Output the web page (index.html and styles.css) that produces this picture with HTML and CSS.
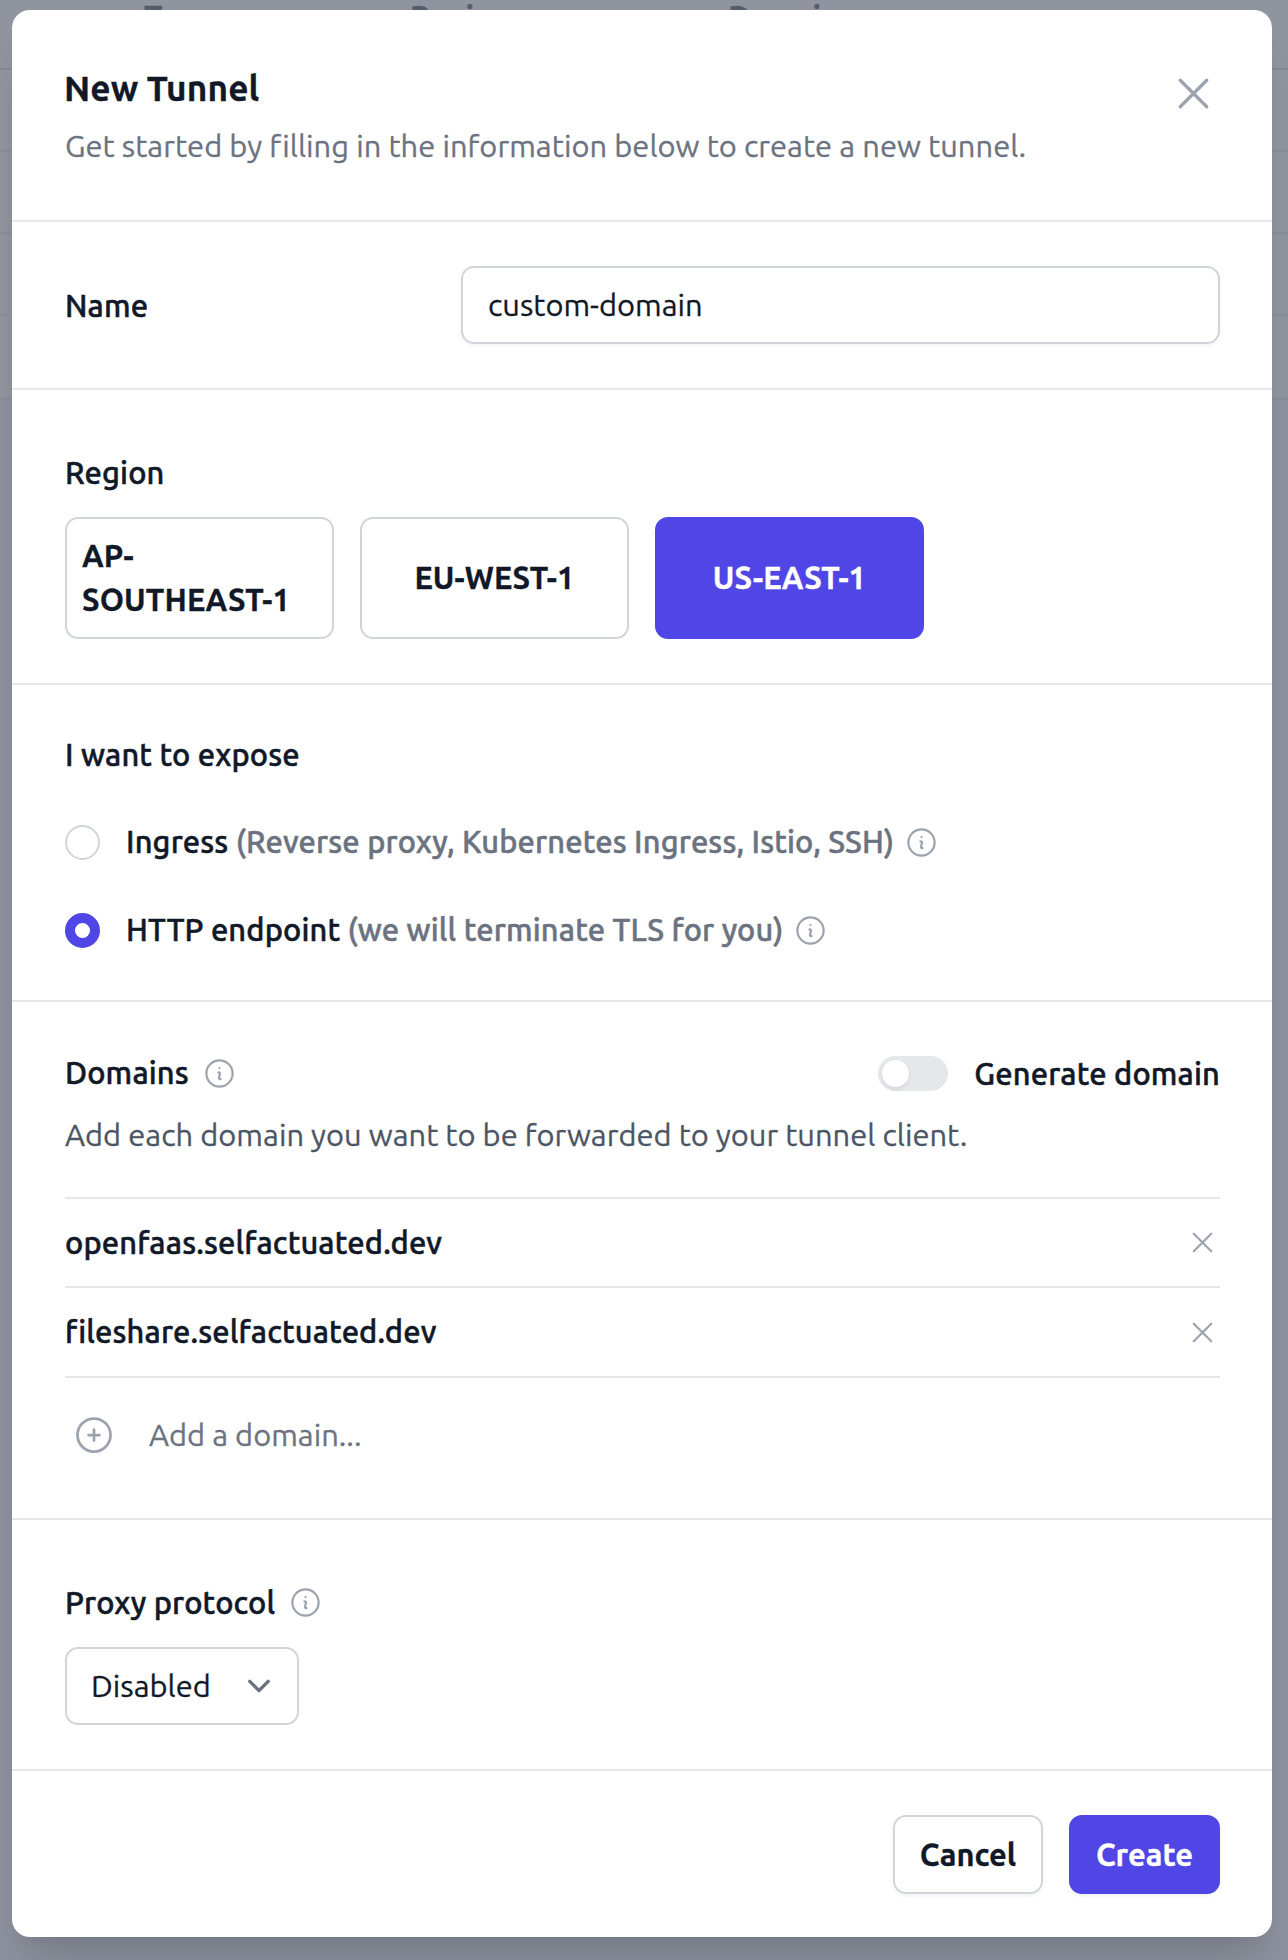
FILE: index.html
```html
<!DOCTYPE html>
<html lang="en">
<head>
<meta charset="utf-8">
<title>New Tunnel</title>
<link rel="stylesheet" href="styles.css">
</head>
<body>
<svg class="sprite" aria-hidden="true">
  <symbol id="info" viewBox="0 0 24 24"><path d="M11.25 11.25l.041-.02a.75.75 0 011.063.852l-.708 2.836a.75.75 0 001.063.853l.041-.021M21 12a9 9 0 11-18 0 9 9 0 0118 0zm-9-3.75h.008v.008H12V8.25z"/></symbol>
  <symbol id="x" viewBox="0 0 24 24"><path d="M6 18L18 6M6 6l12 12"/></symbol>
  <symbol id="plus" viewBox="0 0 24 24"><path d="M12 9v6m3-3H9m12 0a9 9 0 11-18 0 9 9 0 0118 0z"/></symbol>
  <symbol id="chevron" viewBox="0 0 20 20"><path d="M6 8l4 4 4-4"/></symbol>
</svg>

<div class="table">
  <div class="thead"><span class="col-type">Type</span><span class="col-region">Region</span><span>Domains</span></div>
  <div class="trow"></div>
  <div class="trow"></div>
  <div class="trow"></div>
  <div class="trow last"></div>
</div>

<div class="overlay">
  <form class="modal">
    <header class="head">
      <div>
        <h1 class="title">New Tunnel</h1>
        <p class="subtitle">Get started by filling in the information below to create a new tunnel.</p>
      </div>
      <svg class="icon close"><use href="#x"/></svg>
    </header>

    <section class="section name">
      <span class="label">Name</span>
      <div class="input">custom-domain</div>
    </section>

    <section class="section region">
      <div class="label">Region</div>
      <div class="cards">
        <div class="card">AP-<br>SOUTHEAST-1</div>
        <div class="card center">EU-WEST-1</div>
        <div class="card center selected">US-EAST-1</div>
      </div>
    </section>

    <section class="section expose">
      <div class="label">I want to expose</div>
      <div class="option">
        <span class="radio"></span>
        <span class="caption">Ingress <span class="muted">(Reverse proxy, Kubernetes Ingress, Istio, SSH)</span></span>
        <svg class="icon info"><use href="#info"/></svg>
      </div>
      <div class="option">
        <span class="radio checked"></span>
        <span class="caption">HTTP endpoint <span class="muted">(we will terminate TLS for you)</span></span>
        <svg class="icon info"><use href="#info"/></svg>
      </div>
    </section>

    <section class="section domains">
      <div class="domains-head">
        <span class="label">Domains</span>
        <svg class="icon info"><use href="#info"/></svg>
        <span class="toggle"><span class="knob"></span></span>
        <span class="label generate">Generate domain</span>
      </div>
      <p class="hint">Add each domain you want to be forwarded to your tunnel client.</p>
      <ul class="list">
        <li class="item"><span class="caption">openfaas.selfactuated.dev</span><svg class="icon remove"><use href="#x"/></svg></li>
        <li class="item"><span class="caption">fileshare.selfactuated.dev</span><svg class="icon remove"><use href="#x"/></svg></li>
      </ul>
      <div class="add"><svg class="icon plus"><use href="#plus"/></svg><span>Add a domain...</span></div>
    </section>

    <section class="section proxy">
      <div class="proxy-head"><span class="label">Proxy protocol</span><svg class="icon info"><use href="#info"/></svg></div>
      <div class="select"><span>Disabled</span><svg class="icon chevron"><use href="#chevron"/></svg></div>
    </section>

    <footer class="foot">
      <div class="button">Cancel</div>
      <div class="button primary">Create</div>
    </footer>
  </form>
</div>
</body>
</html>
```
FILE: styles.css
```css
* { box-sizing: border-box; }
body { margin: 0; font-family: Ubuntu, "Noto Sans", sans-serif; font-size: 30.85px; line-height: 44px; color: #111827; background: #f3f4f6; -webkit-text-stroke: .3px currentColor; }
h1, p, ul { margin: 0; padding: 0; }
.sprite { display: none; }
.icon { flex: none; fill: none; stroke: #9ca3af; stroke-width: 1.5; stroke-linecap: round; stroke-linejoin: round; }

.table { background: #fff; }
.thead { height: 70px; padding: 0 0 0 144px; border-bottom: 2px solid #d1d5db; background: #f9fafb; display: flex; font-weight: 700; line-height: 34px; }
.col-type { width: 266px; }
.col-region { width: 318px; }
.trow { height: 82px; border-bottom: 2px solid #e5e7eb; }
.last { height: 84px; }

.overlay { position: absolute; inset: 0; height: 1960px; overflow: hidden; padding: 10px 16px 0 12px; background: rgba(107, 114, 128, 0.75); }
.modal { height: 1927px; border-radius: 18px; background: #fff; box-shadow: 0 44px 55px -11px rgba(0,0,0,.1), 0 18px 22px -13px rgba(0,0,0,.1); }
.head { height: 210px; padding: 52px 52px 0 53px; display: flex; justify-content: space-between; }
.title { margin-left: -1px; font-size: 35.2px; line-height: 52px; font-weight: 700; letter-spacing: .12px; }
.subtitle { margin-top: 10px; color: #6b7280; letter-spacing: .04px; }
.close { width: 53px; height: 53px; margin: 5px 0 0; }

.section { border-top: 2px solid #e5e7eb; padding: 0 52px 0 53px; }
.label, .caption { position: relative; font-weight: 500; white-space: nowrap; letter-spacing: .14px; -webkit-text-stroke: .5px currentColor; }
.label { display: block; }
.name { height: 168px; display: flex; align-items: center; justify-content: space-between; }
.name .label { padding-top: 1px; }
.input { width: 759px; height: 78px; padding: 15px 25px; border: 2px solid #d1d5db; border-radius: 13px; box-shadow: 0 2px 4px rgba(0,0,0,.05); }

.region { height: 295px; padding-top: 61px; }
.cards { margin-top: 22px; display: flex; gap: 26px; }
.card { width: 269px; height: 122px; padding: 0 15px; display: flex; align-items: center; border: 2px solid #d1d5db; border-radius: 13px; font-weight: 700; letter-spacing: .14px; }
.center { justify-content: center; }
.selected { background: #4f46e5; border-color: #4f46e5; color: #fff; }

.expose { height: 317px; padding-top: 48px; }
.expose > .label { margin-bottom: -1px; }
.option { margin-top: 44px; height: 44px; display: flex; align-items: center; }
.radio { width: 35px; height: 35px; margin-right: 26px; border: 2px solid #d1d5db; border-radius: 50%; }
.checked { border: 10px solid #4f46e5; }
.muted { color: #6b7280; -webkit-text-stroke-color: #6b7280; }
.info { width: 35px; height: 35px; margin-left: 10px; }

.domains { height: 518px; padding-top: 49px; }
.domains-head, .proxy-head { display: flex; align-items: center; height: 44px; }
.domains-head .info, .proxy-head .info { margin-left: 13px; }
.toggle { width: 70px; height: 35px; margin: 0 26px 0 auto; padding: 4px; border-radius: 18px; background: #e5e7eb; }
.knob { display: block; width: 27px; height: 27px; border-radius: 50%; background: #fff; box-shadow: 0 2px 4px rgba(0,0,0,.08); }
.generate { padding-top: 2px; }
.hint { margin-top: 18px; color: #4b5563; letter-spacing: .02px; }
.list { margin-top: 40px; list-style: none; border-top: 2px solid #e5e7eb; }
.item { height: 89px; display: flex; align-items: center; justify-content: space-between; border-bottom: 2px solid #e5e7eb; }
.item + .item { height: 90px; }
.remove { width: 35px; height: 35px; }
.add { margin-top: 35px; padding-left: 7px; display: flex; align-items: center; color: #6b7280; }
.plus { width: 44px; height: 44px; margin-right: 33px; }

.proxy { height: 251px; padding-top: 60px; }
.proxy-head .label { padding-top: 2px; }
.select { margin-top: 23px; width: 234px; height: 78px; padding: 0 15px 0 24px; border: 2px solid #d1d5db; border-radius: 13px; display: flex; align-items: center; justify-content: space-between; }
.chevron { width: 46px; height: 46px; stroke: #6b7280; }

.foot { border-top: 2px solid #e5e7eb; padding: 44px 52px 0; display: flex; justify-content: flex-end; gap: 26px; }
.button { width: 150px; height: 79px; border: 2px solid #d1d5db; border-radius: 13px; display: flex; align-items: center; justify-content: center; font-weight: 700; box-shadow: 0 2px 4px rgba(0,0,0,.05); }
.primary { width: 151px; background: #4f46e5; border-color: #4f46e5; color: #fff; }
```
